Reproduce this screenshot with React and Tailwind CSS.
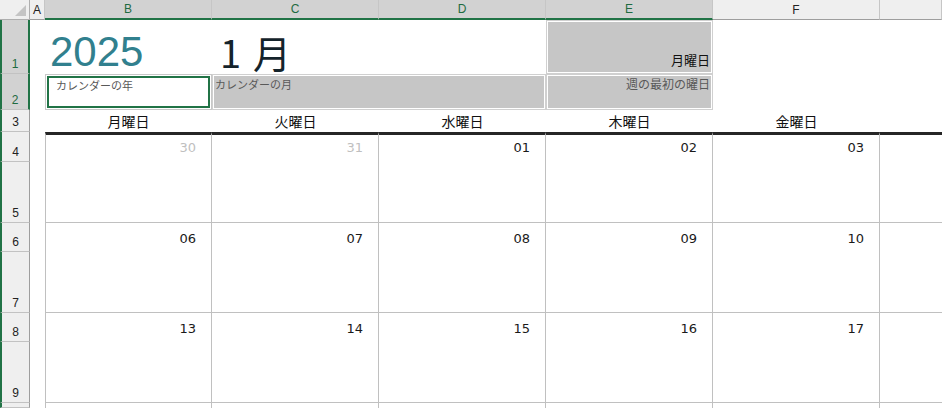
import React from 'react';

const UI = { fontFamily: '"Liberation Sans", "Noto Sans CJK JP", sans-serif' };
const JP = { fontFamily: '"Noto Sans CJK JP", sans-serif' };
const NUM = { fontFamily: '"DejaVu Sans", Verdana, sans-serif' };

// column headers (grid columns 2..8)
const colHeads = [
  { l: 'A', sel: false, cls: 'col-start-2' },
  { l: 'B', sel: true, cls: 'col-start-3' },
  { l: 'C', sel: true, cls: 'col-start-4' },
  { l: 'D', sel: true, cls: 'col-start-5' },
  { l: 'E', sel: true, cls: 'col-start-6' },
  { l: 'F', sel: false, cls: 'col-start-7' },
  { l: '', sel: false, cls: 'col-start-8' },
];

const rowHeads = [
  { n: '1', sel: true, cls: 'row-start-2' },
  { n: '2', sel: true, cls: 'row-start-3' },
  { n: '3', sel: false, cls: 'row-start-4' },
  { n: '4', sel: false, cls: 'row-start-5' },
  { n: '5', sel: false, cls: 'row-start-6' },
  { n: '6', sel: false, cls: 'row-start-7' },
  { n: '7', sel: false, cls: 'row-start-8' },
  { n: '8', sel: false, cls: 'row-start-9' },
  { n: '9', sel: false, cls: 'row-start-10' },
  { n: '', sel: false, cls: 'row-start-11' },
];

const weekdays = [
  { t: '月曜日', cls: 'col-start-3' },
  { t: '火曜日', cls: 'col-start-4' },
  { t: '水曜日', cls: 'col-start-5' },
  { t: '木曜日', cls: 'col-start-6' },
  { t: '金曜日', cls: 'col-start-7' },
];

const weekRows = ['row-start-5', 'row-start-7', 'row-start-9'];
const dayCols = ['col-start-3', 'col-start-4', 'col-start-5', 'col-start-6', 'col-start-7', 'col-start-8'];

const weeks = [
  [{ d: '30', out: true }, { d: '31', out: true }, { d: '01' }, { d: '02' }, { d: '03' }, null],
  [{ d: '06' }, { d: '07' }, { d: '08' }, { d: '09' }, { d: '10' }, null],
  [{ d: '13' }, { d: '14' }, { d: '15' }, { d: '16' }, { d: '17' }, null],
];

function GrayCell({ className, children, inner }) {
  return (
    <div className={`${className} border border-[#d0d0d0] p-px bg-white`}>
      <div className={`h-full bg-[#c6c6c6] flex ${inner}`}>{children}</div>
    </div>
  );
}

export default function App() {
  return (
    <div
      className="w-[942px] h-[408px] overflow-hidden bg-white grid grid-cols-[30px_15px_167px_167px_167px_167px_167px_1fr] grid-rows-[20px_54px_36px_22px_30px_61px_29px_61px_29px_61px_1fr]"
      style={UI}
    >
      {/* corner */}
      <div className="col-start-1 row-start-1 bg-[#efefef] border-r border-b border-[#aeaeae] relative">
        <div className="absolute right-[3px] bottom-[3px] w-0 h-0 border-l-[11px] border-l-transparent border-b-[11px] border-b-[#c4c4c4]" />
      </div>

      {colHeads.map((c) => (
        <div
          key={c.cls}
          className={`${c.cls} row-start-1 flex items-center justify-center text-[12px] border-r border-[#c6c6c6] ${
            c.sel
              ? 'bg-[#d2d2d2] text-[#1e6b41] border-b-2 border-b-[#217346]'
              : 'bg-[#efefef] text-[#222] border-b border-b-[#9e9e9e]'
          }`}
        >
          {c.l}
        </div>
      ))}

      {rowHeads.map((r) => (
        <div
          key={r.cls}
          className={`${r.cls} col-start-1 border-l-2 border-l-[#217346] border-b border-b-[#c2c2c2] flex items-end justify-center pb-[3px] text-[12px] leading-none ${
            r.sel
              ? 'bg-[#d2d2d2] text-[#1e6b41] border-r-2 border-r-[#217346]'
              : 'bg-[#efefef] text-[#222] border-r border-r-[#9e9e9e]'
          }`}
        >
          {r.n}
        </div>
      ))}

      {/* row 1 */}
      <div className="col-start-3 row-start-2 flex items-end pl-[5px] pb-[1px]">
        <span className="text-[42px] leading-none text-[#31808e]" style={UI}>2025</span>
      </div>
      <div className="col-start-4 col-span-2 row-start-2 flex items-end pl-[8px] pb-[3px]">
        <span className="text-[38px] leading-none text-[#14232b]" style={JP}>
          1<span className="ml-[12px]">月</span>
        </span>
      </div>
      <GrayCell className="col-start-6 row-start-2" inner="items-end justify-end pr-[1px] pb-[6px]">
        <span className="text-[13px] leading-none text-[#111]" style={JP}>月曜日</span>
      </GrayCell>

      {/* row 2 */}
      <div className="col-start-3 row-start-3 border border-[#c8c8c8] p-px bg-white">
        <div className="h-full border-2 border-[#217346] pl-[7px] flex items-start">
          <span className="text-[11px] leading-[14px] text-[#595959]" style={JP}>カレンダーの年</span>
        </div>
      </div>
      <GrayCell className="col-start-4 col-span-2 row-start-3" inner="items-start pl-[1px] pt-px">
        <span className="text-[11px] leading-[15px] text-[#595959]" style={JP}>カレンダーの月</span>
      </GrayCell>
      <GrayCell className="col-start-6 row-start-3" inner="items-start justify-end pr-[1px]">
        <span className="text-[12px] leading-[16px] text-[#595959]" style={JP}>週の最初の曜日</span>
      </GrayCell>

      {/* row 3: weekday labels */}
      {weekdays.map((w) => (
        <div key={w.cls} className={`${w.cls} row-start-4 flex items-center justify-center`}>
          <span className="text-[14px] leading-none text-[#111]" style={JP}>{w.t}</span>
        </div>
      ))}

      {/* calendar weeks */}
      {weeks.map((week, wi) =>
        week.map((day, di) => (
          <div
            key={`${wi}-${di}`}
            className={`${weekRows[wi]} ${dayCols[di]} row-span-2 border-b border-[#c0c0c0] ${
              di === 0 ? 'border-l' : ''
            } ${di < 5 ? 'border-r' : ''} ${wi === 0 ? 'border-t-[3px] border-t-[#262626]' : ''} flex justify-end items-start pr-[15px] ${
              wi === 0 ? 'pt-[5px]' : 'pt-[8px]'
            }`}
          >
            {day && (
              <span
                className={`text-[13px] leading-[16px] ${day.out ? 'text-[#bfbfbf]' : 'text-[#1a1a1a]'}`}
                style={NUM}
              >
                {day.d}
              </span>
            )}
          </div>
        ))
      )}

      {/* row 10 partial */}
      {dayCols.map((c, i) => (
        <div
          key={c}
          className={`${c} row-start-11 ${i === 0 ? 'border-l' : ''} ${i < 5 ? 'border-r' : ''} border-[#c0c0c0]`}
        />
      ))}
    </div>
  );
}
